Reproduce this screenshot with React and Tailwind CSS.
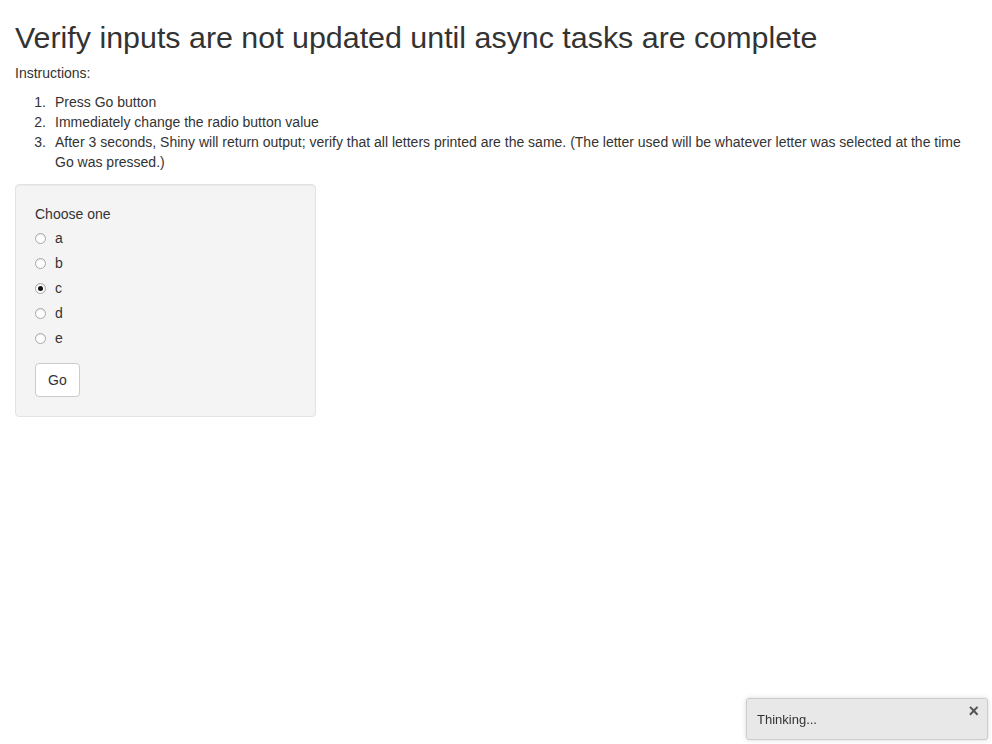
import React from "react";

const options = ["a", "b", "c", "d", "e"];
const steps = [
    "Press Go button",
    "Immediately change the radio button value",
    "After 3 seconds, Shiny will return output; verify that all letters printed are the same. (The letter used will be whatever letter was selected at the time Go was pressed.)",
];

const Radio = ({ label, checked }) => (
    <label className="flex items-center h-5 mt-[5px] first:mt-0">
        <span className="w-[11px] h-[11px] rounded-full border border-[#a8a8a8] bg-white flex items-center justify-center shadow-[inset_0_1px_1px_rgba(0,0,0,0.1)]">
            {checked && <span className="w-[5px] h-[5px] rounded-full bg-[#111]" />}
        </span>
        <span className="ml-[9px]">{label}</span>
    </label>
);

export default function App() {
    return (
        <div className="px-[15px] text-[14px] leading-5 text-[#333] font-['Liberation_Sans',Arial,sans-serif]">
            <h1 className="mt-[21px] mb-[9px] text-[30.4px] leading-[1.1] font-normal">
                Verify inputs are not updated until async tasks are complete
            </h1>
            <p className="mb-[9px]">Instructions:</p>
            <ol className="mb-[12px]">
                {steps.map((s, i) => (
                    <li key={i} className="flex">
                        <span className="w-[32px] shrink-0 text-right pr-[1px]">{i + 1}.</span>
                        <span className="ml-2">{s}</span>
                    </li>
                ))}
            </ol>

            <div className="w-[301px] rounded bg-[#f4f4f4] border border-[#e3e3e3] shadow-[inset_0_1px_1px_rgba(0,0,0,0.05)] p-[19px]">
                <div className="mb-1">Choose one</div>
                <div className="flex flex-col">
                    {options.map(o => (
                        <Radio key={o} label={o} checked={o === "c"} />
                    ))}
                </div>
                <button className="mt-[15px] h-[34px] px-3 bg-white border border-[#ccc] rounded text-[#333]">
                    Go
                </button>
            </div>

            {/* notification */}
            <div className="fixed right-1 bottom-1 w-[242px] h-[42px] bg-[#e8e8e8] border border-[#ccc] rounded-[3px] shadow-[0_0_5px_rgba(0,0,0,0.15)] flex items-center pl-[10px]">
                <span className="text-[13px] text-[#333] mt-[2px]">Thinking...</span>
                <span className="absolute right-[8px] top-[2px] text-[18px] font-bold text-[#555] leading-5">×</span>
            </div>
        </div>
    );
}
